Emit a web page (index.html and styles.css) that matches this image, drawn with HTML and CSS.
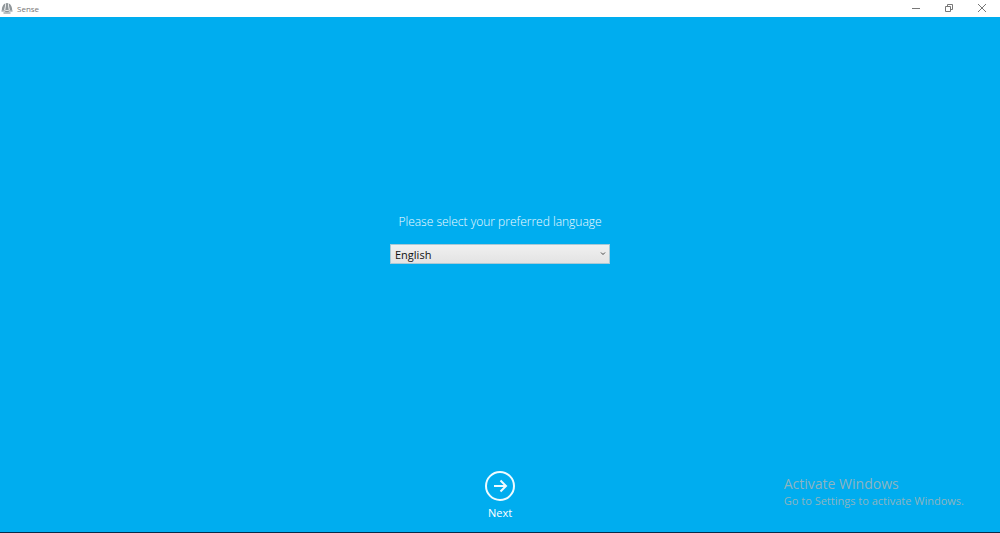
FILE: index.html
```html
<!DOCTYPE html>
<html lang="en">
<head>
    <meta charset="utf-8">
    <title>Sense</title>
    <link rel="stylesheet" href="styles.css">
</head>
<body>
<header class="titlebar">
    <svg class="logo" viewBox="0 0 12 12">
        <path class="dome" d="M.8 8.500Q.8 3 4.500 1.300L3.200 8zM11.200 8.500Q11.200 3 7.500 1.300L8.800 8zM5.200 1h1.600L7.800 8.200H4.200z"/>
        <path d="M.5 9q3-.6 5.500.8q2.500-1.400 5.500-.8M2.500 11h7"/>
    </svg>
    <span class="title">Sense</span>
    <div class="controls">
        <button type="button" aria-label="Minimize">
            <svg viewBox="0 0 10 10"><path d="M1 5.500h8"/></svg>
        </button>
        <button type="button" aria-label="Restore">
            <svg viewBox="0 0 10 10"><path d="M1.500 3.500h5v5h-5zM3.500 3.500v-2h5v5h-2"/></svg>
        </button>
        <button type="button" aria-label="Close">
            <svg viewBox="0 0 10 10"><path d="M1 1l8 8M9 1l-8 8"/></svg>
        </button>
    </div>
</header>
<main class="setup">
    <form class="language">
        <label for="language">Please select your preferred language</label>
        <div class="dropdown">
            <select id="language">
                <option>English</option>
            </select>
            <svg class="arrow" viewBox="0 0 6 4"><path d="M1 .5l2 2 2-2"/></svg>
        </div>
    </form>
    <button type="button" class="next">
        <svg viewBox="0 0 30 30">
            <circle cx="15" cy="15" r="14"/>
            <path d="M9 15h12M15.500 9.500L21 15l-5.500 5.500"/>
        </svg>
        <span>Next</span>
    </button>
    <div class="watermark">
        <p class="big">Activate Windows</p>
        <p>Go to Settings to activate Windows.</p>
    </div>
</main>
<div class="taskbar"></div>
</body>
</html>
```
FILE: styles.css
```css
*{
    box-sizing: border-box;
}
body{
    margin: 0;
    min-height: 100vh;
    display: flex;
    flex-direction: column;
    background: #00adef;
    font-family: "Open Sans", "Noto Sans", sans-serif;
}
p{
    margin: 0;
}
button{
    padding: 0;
    border: 0;
    background: none;
    font-family: inherit;
}
svg{
    fill: none;
    stroke: #777;
}
.titlebar{
    display: flex;
    align-items: center;
    height: 17px;
    padding-left: 1px;
    background: #fff;
}
.logo{
    width: 12px;
    height: 12px;
    margin-bottom: 1px;
    stroke: #7d8286;
}
.logo .dome{
    fill: #90969a;
    stroke: none;
}
.title{
    margin-left: 4px;
    font-size: 8px;
    line-height: 14px;
    color: #777;
}
.controls{
    display: flex;
    margin-left: auto;
    padding-right: 2px;
}
.controls button{
    display: flex;
    justify-content: center;
    width: 33px;
    padding-bottom: 2px;
}
.controls svg{
    width: 10px;
    height: 10px;
}
.setup{
    position: relative;
    flex: 1;
    display: flex;
    flex-direction: column;
    align-items: center;
    padding-bottom: 11px;
}
.language{
    flex: 1;
    display: flex;
    flex-direction: column;
    align-items: center;
    justify-content: center;
    gap: 13px;
    padding-bottom: 11px;
}
.language label{
    font-size: 12px;
    font-weight: 300;
    line-height: 18px;
    color: #f0fbff;
}
.dropdown{
    position: relative;
}
.dropdown select{
    display: block;
    appearance: none;
    width: 220px;
    height: 20px;
    padding: 0 4px;
    border: 1px solid #a9c9d6;
    border-radius: 0;
    background: linear-gradient(#f0f0f0, #e3e3e3);
    font-family: inherit;
    font-size: 11px;
    color: #111;
}
.arrow{
    position: absolute;
    right: 4px;
    top: 8px;
    width: 6px;
    height: 4px;
    stroke: #444;
}
.next{
    display: flex;
    flex-direction: column;
    align-items: center;
    gap: 4px;
    font-size: 11px;
    line-height: 16px;
    color: #fff;
}
.next svg{
    width: 30px;
    height: 30px;
    stroke: #effbff;
    stroke-width: 2;
}
.watermark{
    position: absolute;
    right: 36px;
    bottom: 23px;
    font-size: 11px;
    line-height: 16px;
    color: #8db4c0;
}
.watermark .big{
    font-size: 14px;
    line-height: 18px;
}
.taskbar{
    height: 1px;
    background: #0a2a48;
}
```
